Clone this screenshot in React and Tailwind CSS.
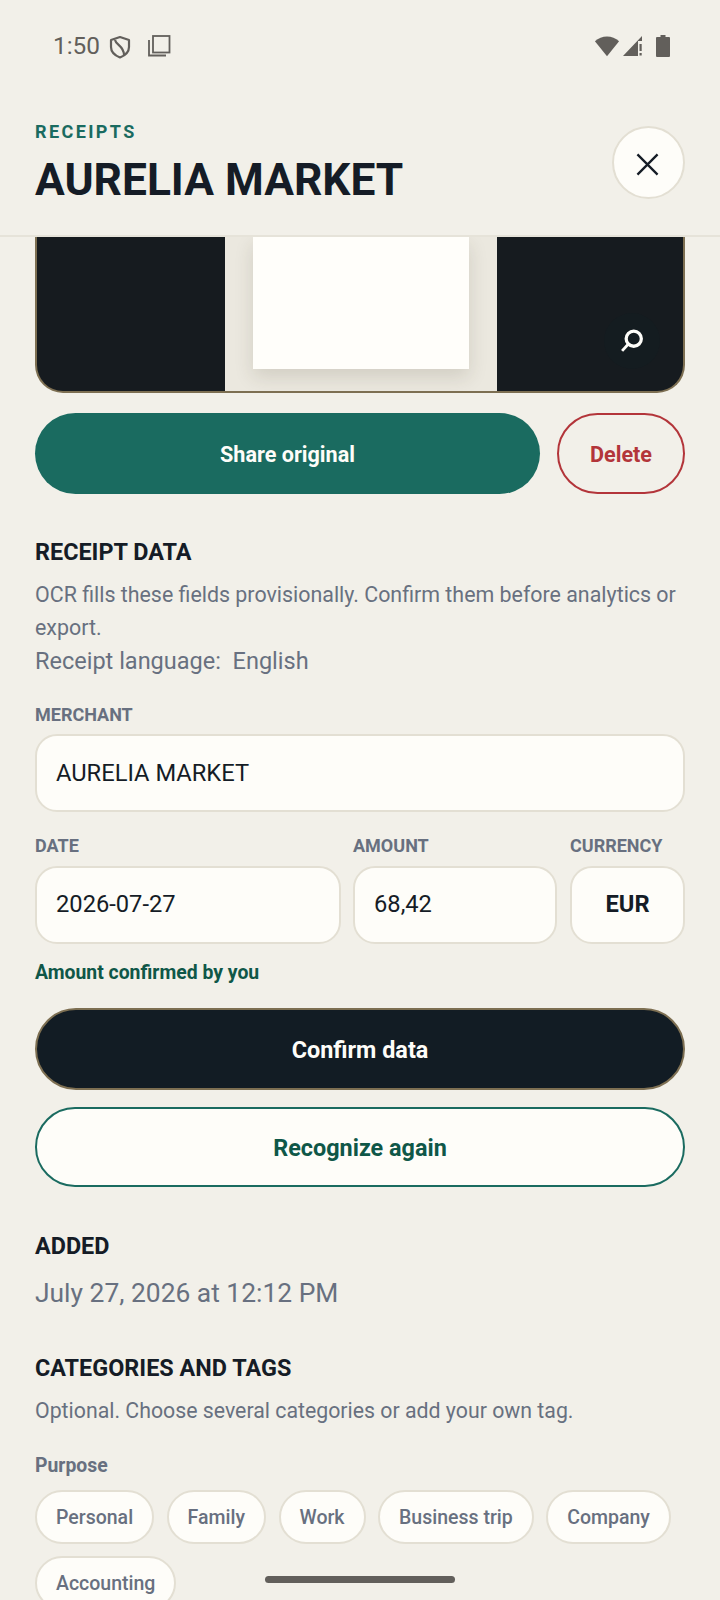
import React from "react";

const F = "font-['Roboto',sans-serif]";

function Label({ children, className = "" }) {
  return <div className={`text-[18px] leading-[20px] font-bold text-[#687080] ${className}`}>{children}</div>;
}
function Heading({ children }) {
  return <div className="text-[23.4px] leading-[28px] font-bold text-[#151c26]">{children}</div>;
}
function Field({ children, className = "" }) {
  return (
    <div className={`h-[78px] flex items-center rounded-[22px] border-2 border-[#e3dfd3] bg-[#fefdf9] px-[19px] text-[#151c26] text-[23.7px] ${className}`}>
      {children}
    </div>
  );
}
function Chip({ children }) {
  return (
    <div className="h-[54px] pt-[2px] flex items-center rounded-full border-2 border-[#e3dfd3] bg-[#fefdf9] px-[19px] text-[19.5px] font-medium text-[#687080]">
      {children}
    </div>
  );
}

export default function App() {
  return (
    <div className={`${F} relative w-[720px] h-[1600px] overflow-hidden bg-[#f2f0e9]`}>
      <div className="h-[237px] border-b-2 border-[#e6e3d9] relative z-10 bg-[#f2f0e9]">
        <div className="h-[92px] pl-[53px] pr-[50px] flex items-center justify-between">
          <div className="flex items-center text-[#625f5b]">
            <span className="text-[24.4px]">1:50</span>
            <svg className="ml-[9px] mt-[2px]" width="22" height="26" viewBox="0 0 22 24" fill="none" stroke="#625f5b" strokeWidth="2.2">
              <path d="M11 2 L20 5 V12 C20 17 16 20.5 11 22.5 C6 20.5 2 17 2 12 V5 Z" strokeLinejoin="round" />
              <path d="M6 5 C7 10 15 11 15 20" />
            </svg>
            <svg className="ml-[16px]" width="24" height="24" viewBox="0 0 24 24" fill="none" stroke="#625f5b" strokeWidth="1.8">
              <rect x="6" y="2" width="16.5" height="16.5" />
              <path d="M2 6 V21.5 H19" />
            </svg>
          </div>
          <div className="flex items-center">
            <svg width="26" height="24" viewBox="0 0 28 24" fill="#625f5b">
              <path d="M1 7 C8 0 20 0 27 7 L14 23 Z" />
            </svg>
            <svg className="ml-[2px]" width="22" height="24" viewBox="0 0 22 24" fill="#625f5b">
              <path d="M20 2 V7 H16 V22 H1 Z" />
              <rect x="17.5" y="10" width="2.2" height="7" />
              <rect x="17.5" y="19" width="2.2" height="2.5" />
            </svg>
            <svg className="ml-[12px]" width="14" height="24" viewBox="0 0 14 24" fill="#625f5b">
              <path d="M4.5 1 H9.5 V3 H13 Q14 3 14 4 V22 Q14 23 13 23 H1 Q0 23 0 22 V4 Q0 3 1 3 H4.5 Z" />
            </svg>
          </div>
        </div>
        <div className="pl-[35px] pr-[35px] flex items-start justify-between">
          <div>
            <div className="mt-[30px] text-[18px] leading-[20px] font-bold tracking-[2.4px] text-[#1a6b60]">RECEIPTS</div>
            <div className="mt-[12px] text-[44.3px] leading-[52px] font-bold text-[#151c26]">AURELIA MARKET</div>
          </div>
          <div className="mt-[34px] w-[73px] h-[73px] rounded-full border-2 border-[#e3dfd3] bg-[#fefdf9] flex items-center justify-center">
            <svg className="mt-[4px] mr-[3px]" width="23" height="23" viewBox="0 0 24 24" fill="none" stroke="#151c26" strokeWidth="2.4">
              <path d="M1.5 1.5 L22.5 22.5 M22.5 1.5 L1.5 22.5" />
            </svg>
          </div>
        </div>
      </div>

      <div className="px-[35px]">
        <div className="relative h-[156px] rounded-b-[28px] overflow-hidden border-x-2 border-b-2 border-[#7d6f52] bg-[#161b1f] flex justify-center">
          <div className="ml-[2px] w-[272px] bg-[#ebe8df] flex justify-center items-start">
            <div className="w-[216px] h-[132px] bg-[#fffefa] shadow-[0_8px_18px_rgba(60,50,30,0.14)]" />
          </div>
          <div className="absolute right-[23px] bottom-[22px] w-[56px] h-[56px] rounded-full bg-[#141c20] flex items-center justify-center">
            <svg width="28" height="28" viewBox="0 0 24 24" fill="none" stroke="#fefdf9" strokeWidth="2.8">
              <circle cx="13.5" cy="10" r="6.5" />
              <path d="M8.5 15 L3.5 20.5" strokeWidth="2.4" />
            </svg>
          </div>
        </div>

        <div className="mt-[20px] flex gap-[17px]">
          <div className="flex-1 h-[81px] pt-[3px] rounded-full bg-[#1a6b60] flex items-center justify-center text-[21.6px] font-bold text-[#fefdf9]">Share original</div>
          <div className="w-[128px] h-[81px] pt-[3px] rounded-full border-2 border-[#b3353a] flex items-center justify-center text-[21.6px] font-bold text-[#b3353a]">Delete</div>
        </div>

        <div className="mt-[44px]"><Heading>RECEIPT DATA</Heading></div>
        <div className="mt-[12px] text-[21.4px] leading-[33px] text-[#687080]">
          OCR fills these fields provisionally. Confirm them before analytics or export.
        </div>
        <div className="mt-[1px] text-[23.5px] leading-[33px] text-[#687080]">Receipt language:&nbsp; English</div>

        <Label className="mt-[27px]">MERCHANT</Label>
        <Field className="mt-[9px] w-[650px]"><span className="pt-[2px]">AURELIA MARKET</span></Field>

        <div className="mt-[24px] flex">
          <div className="w-[306px]">
            <Label>DATE</Label>
            <Field className="mt-[10px]">2026-07-27</Field>
          </div>
          <div className="ml-[12px] w-[204px]">
            <Label>AMOUNT</Label>
            <Field className="mt-[10px]">68,42</Field>
          </div>
          <div className="ml-[13px] w-[115px]">
            <Label>CURRENCY</Label>
            <Field className="mt-[10px] justify-center font-bold">EUR</Field>
          </div>
        </div>

        <div className="mt-[17px] text-[19.4px] leading-[24px] font-bold text-[#0f5748]">Amount confirmed by you</div>

        <div className="mt-[23px] h-[82px] pt-[3px] rounded-full border-2 border-[#7d6f52] bg-[#121c24] flex items-center justify-center text-[23.4px] font-bold text-[#fefdf9]">Confirm data</div>
        <div className="mt-[17px] h-[80px] pt-[3px] rounded-full border-2 border-[#1a6b60] bg-[#fefdf9] flex items-center justify-center text-[23.4px] font-bold text-[#0f5748]">Recognize again</div>

        <div className="mt-[45px]"><Heading>ADDED</Heading></div>
        <div className="mt-[17px] text-[26.4px] leading-[32px] text-[#687080]">July 27, 2026 at 12:12 PM</div>

        <div className="mt-[45px]"><Heading>CATEGORIES AND TAGS</Heading></div>
        <div className="mt-[14px] text-[21.3px] leading-[30px] text-[#687080]">Optional. Choose several categories or add your own tag.</div>

        <div className="mt-[29px] text-[19.4px] leading-[22px] font-bold text-[#687080]">Purpose</div>
        <div className="mt-[13px] flex flex-wrap gap-x-[12.5px] gap-y-[12px]">
          <Chip>Personal</Chip>
          <Chip>Family</Chip>
          <Chip>Work</Chip>
          <Chip>Business trip</Chip>
          <Chip>Company</Chip>
          <Chip>Accounting</Chip>
        </div>
      </div>

      <div className="absolute left-[265px] top-[1576px] w-[190px] h-[7px] rounded-full bg-[#625f5b]" />
    </div>
  );
}
